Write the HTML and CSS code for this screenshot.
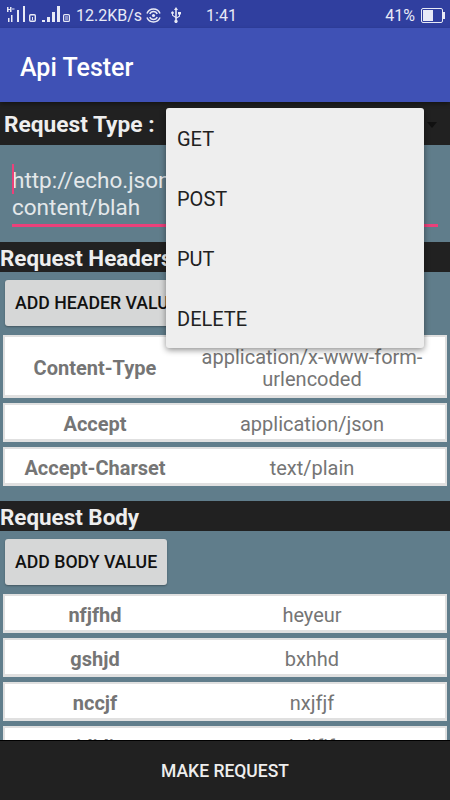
FILE: index.html
```html
<!DOCTYPE html>
<html lang="en">
<head>
    <meta charset="UTF-8">
    <meta name="viewport" content="width=device-width, initial-scale=1.0">
    <title>Api Tester</title>
    <link rel="stylesheet" href="styles.css">
</head>
<body>
    <div class="screen">
        <div class="status-bar">
            <svg class="signal" width="72" height="28" viewBox="0 0 72 28" fill="#e8eaf6">
                <rect x="7" y="7" width="1.5" height="5"/><rect x="10" y="7" width="1.5" height="5"/><rect x="8" y="9" width="2" height="1"/><rect x="12" y="8.5" width="2.5" height="1"/>
                <rect x="8" y="18" width="1.5" height="4"/><rect x="11" y="15" width="1.5" height="7"/><rect x="17" y="10" width="2" height="12"/><rect x="23" y="6" width="2" height="16"/>
                <rect x="29.7" y="14.7" width="5.6" height="6.6" rx="1" fill="none" stroke="#e8eaf6" stroke-width="1.4"/><rect x="32" y="17" width="1" height="3"/>
                <rect x="42" y="20" width="3" height="2"/><rect x="47" y="17" width="3" height="5"/><rect x="52" y="12" width="3" height="10"/><rect x="57" y="6" width="3" height="16"/>
                <rect x="63.6" y="14.6" width="5.8" height="6.8" rx="1" fill="none" stroke="#e8eaf6" stroke-width="1.2"/><rect x="65" y="16.5" width="3" height="1"/><rect x="65" y="18.5" width="3" height="1"/>
            </svg>
            <span class="speed">12.2KB/s</span>
            <svg class="hotspot" width="15" height="15" viewBox="0 0 15 15" fill="none" stroke="#e8eaf6" stroke-width="1.5">
                <path d="M1 5.5a7 7 0 0 1 13 0M1 9.5a7 7 0 0 0 13 0"/>
                <path d="M3.8 6a4 4 0 0 1 7.4 0M3.8 9a4 4 0 0 0 7.4 0"/>
                <circle cx="7.5" cy="7.5" r="1.6" fill="#e8eaf6" stroke="none"/>
            </svg>
            <svg class="usb" width="12" height="16" viewBox="0 0 12 16" fill="#e8eaf6">
                <path d="M6 0l2 3H6.8v7.3l2.2-1.5V7.5H8V5h3v2.5h-1V9.4l-3.2 2.2v1.5a1.6 1.6 0 1 1-1.6 0V10.8L2 8.6V7a1.3 1.3 0 1 1 1 0v1.1l2.2 1.5V3H4z"/>
            </svg>
            <span class="clock">1:41</span>
            <span class="battery-text">41%</span>
            <span class="battery"><span class="battery-level"></span></span>
            <span class="battery-nub"></span>
        </div>

        <div class="app-bar">Api Tester</div>

        <div class="content">
            <div class="type-row">
                <span>Request Type :</span>
                <span class="arrow"></span>
            </div>

            <div class="url-box">
                <div class="url-input"><span class="cursor"></span>http://echo.jsontest.com/key/value/<br>content/blah</div>
            </div>

            <div class="section-bar">Request Headers</div>
            <div class="section">
                <button type="button" class="add-btn">ADD HEADER VALUE</button>
                <div class="kv-row kv-tall">
                    <div class="kv-key">Content-Type</div>
                    <div class="kv-val">application/x-www-form-urlencoded</div>
                </div>
                <div class="kv-row">
                    <div class="kv-key">Accept</div>
                    <div class="kv-val">application/json</div>
                </div>
                <div class="kv-row">
                    <div class="kv-key">Accept-Charset</div>
                    <div class="kv-val">text/plain</div>
                </div>
            </div>

            <div class="section-bar body-bar">Request Body</div>
            <div class="section">
                <button type="button" class="add-btn">ADD BODY VALUE</button>
                <div class="kv-row">
                    <div class="kv-key">nfjfhd</div>
                    <div class="kv-val">heyeur</div>
                </div>
                <div class="kv-row">
                    <div class="kv-key">gshjd</div>
                    <div class="kv-val">bxhhd</div>
                </div>
                <div class="kv-row">
                    <div class="kv-key">nccjf</div>
                    <div class="kv-val">nxjfjf</div>
                </div>
                <div class="kv-row">
                    <div class="kv-key">jdjdj</div>
                    <div class="kv-val">hdjfjf</div>
                </div>
            </div>
        </div>

        <div class="make-request">MAKE REQUEST</div>

        <div class="menu">
            <div class="menu-item">GET</div>
            <div class="menu-item">POST</div>
            <div class="menu-item">PUT</div>
            <div class="menu-item">DELETE</div>
        </div>
    </div>
</body>
</html>
```

FILE: styles.css
```css
html, body {
    margin: 0;
    padding: 0;
}
body {
    font-family: Roboto, "Noto Sans", sans-serif;
    background-color: #607d8b;
}
.screen {
    position: relative;
    width: 450px;
    height: 800px;
    display: flex;
    flex-direction: column;
    overflow: hidden;
}
.status-bar {
    height: 28px;
    flex: none;
    display: flex;
    align-items: center;
    background-color: #303f9f;
    color: #e8eaf6;
    font-size: 16px;
    padding: 2px 5px 0 0;
    box-sizing: border-box;
}
.signal {
    flex: none;
    margin-top: -2px;
}
.speed {
    margin-left: 4px;
}
.hotspot {
    margin-left: 4px;
}
.usb {
    margin-left: 9px;
}
.clock {
    margin-left: 24px;
}
.battery-text {
    margin-left: auto;
}
.battery {
    margin-left: 6px;
    width: 22px;
    height: 15px;
    border: 1px solid #e8eaf6;
    box-sizing: border-box;
    border-radius: 2px;
    padding: 1px;
}
.battery-level {
    display: block;
    width: 10px;
    height: 100%;
    background-color: #e8eaf6;
}
.battery-nub {
    width: 2px;
    height: 7px;
    background-color: #e8eaf6;
}
.app-bar {
    position: relative;
    height: 74px;
    flex: none;
    box-sizing: border-box;
    display: flex;
    align-items: center;
    padding: 4px 0 0 20px;
    background-color: #3f51b5;
    box-shadow: 0 2px 4px rgba(0, 0, 0, 0.4);
    color: #fff;
    font-size: 25px;
    font-weight: 500;
}
.content {
    flex: 1;
    min-height: 0;
    overflow: hidden;
}
.type-row {
    height: 43px;
    box-sizing: border-box;
    background-color: #212121;
    color: #eee;
    font-size: 22.7px;
    font-weight: 700;
    display: flex;
    align-items: center;
    justify-content: space-between;
    padding: 2px 13px 0 4px;
}
.arrow {
    width: 0;
    height: 0;
    border-left: 5px solid transparent;
    border-right: 5px solid transparent;
    border-top: 6px solid #111;
}
.url-box {
    height: 97px;
    box-sizing: border-box;
    padding: 19px 12px 0;
}
.url-input {
    position: relative;
    font-size: 22.5px;
    line-height: 27px;
    color: #e4e8ea;
    height: 63px;
    padding-top: 3px;
    white-space: nowrap;
    border-bottom: 3px solid #ec407a;
    box-sizing: border-box;
    overflow: hidden;
}
.cursor {
    position: absolute;
    left: 0;
    top: 0;
    width: 2px;
    height: 30px;
    background-color: #ec407a;
}
.section-bar {
    height: 30px;
    box-sizing: border-box;
    background-color: #212121;
    color: #eee;
    font-size: 22.4px;
    font-weight: 700;
    line-height: 32px;
}
.body-bar {
    margin-top: 15px;
}
.section {
    padding: 8px 3px 0;
    display: flex;
    flex-direction: column;
    gap: 5px;
}
.add-btn {
    align-self: flex-start;
    margin: 0 0 4px 2px;
    height: 46px;
    padding: 0 10px;
    border: none;
    border-radius: 3px;
    background-color: #d6d7d7;
    box-shadow: 0 1px 2px rgba(0, 0, 0, 0.3);
    color: #111;
    font-family: inherit;
    font-size: 17.7px;
    font-weight: 500;
    white-space: nowrap;
}
.kv-row {
    display: flex;
    align-items: center;
    min-height: 39px;
    box-sizing: border-box;
    padding-top: 3px;
    background-color: #fff;
    border: 2px solid #e0e0e0;
    border-bottom-width: 3px;
    color: #757575;
    font-size: 20px;
    text-align: center;
    line-height: 22px;
}
.kv-tall {
    min-height: 63px;
}
.kv-key {
    width: 180px;
    font-weight: 700;
    flex: none;
}
.kv-val {
    flex: 1;
    padding: 0 16px 0 10px;
}
.make-request {
    height: 60px;
    flex: none;
    background-color: #212121;
    border-top: 1px solid #000;
    box-sizing: border-box;
    color: #eee;
    font-size: 17.5px;
    font-weight: 500;
    display: flex;
    align-items: center;
    justify-content: center;
}
.menu {
    position: absolute;
    left: 166px;
    top: 108px;
    width: 258px;
    height: 240px;
    background-color: #eee;
    border-radius: 3px;
    box-shadow: 0 2px 6px rgba(0, 0, 0, 0.45);
}
.menu-item {
    height: 60px;
    display: flex;
    align-items: center;
    padding: 2px 0 0 11px;
    box-sizing: border-box;
    color: #212121;
    font-size: 20px;
}
```
